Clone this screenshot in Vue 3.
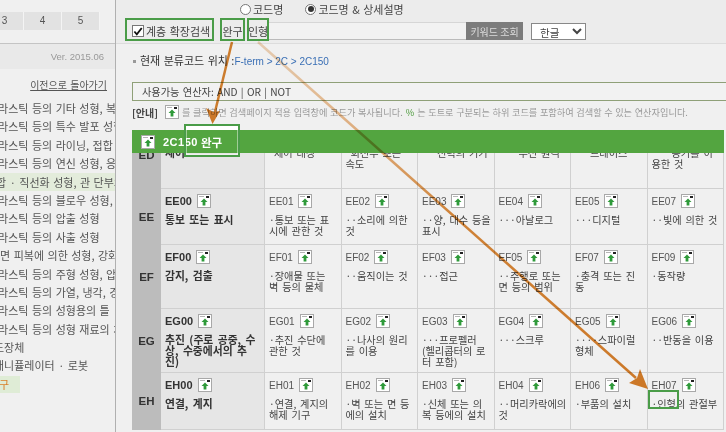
<template>
  <div class="page">
    <svg width="0" height="0" class="defs">
      <symbol id="copy-icon" viewBox="0 0 14 14">
        <rect x="0.5" y="0.5" width="13" height="13" fill="#fff" stroke="#a8a8a8" />
        <rect x="2" y="2" width="5" height="1" fill="#b5b5b5" />
        <rect x="9" y="2" width="3" height="2" fill="#222" />
        <path d="M7 4.5 L10.5 8 H8.4 V11.5 H5.6 V8 H3.5 Z" fill="#2f9a3a" />
      </symbol>
    </svg>

    <aside class="side">
      <div class="tabs">
        <span v-for="n in [3, 4, 5]" :key="n" class="tab">{{ n }}</span>
      </div>
      <div class="ver">Ver. 2015.06</div>
      <a class="back">이전으로 돌아가기</a>
      <ul class="tree">
        <li v-for="item in treeItems" :key="item.text" :class="item.cls">{{ item.text }}</li>
      </ul>
    </aside>

    <main class="main">
      <div class="search">
        <div class="radios">
          <label class="radio-label"><span class="radio"></span>코드명</label>
          <label class="radio-label"><span class="radio on"></span>코드명 &amp; 상세설명</label>
        </div>
        <div class="search-row">
          <label class="check-label">
            <span class="check">
              <svg width="11" height="11" viewBox="0 0 11 11">
                <path d="M1.5 5.5 L4.2 8.6 L9.6 1.6" fill="none" stroke="#111" stroke-width="2" />
              </svg>
            </span>
            계층 확장검색
          </label>
          <span class="term first">완구</span>
          <span class="term second">인형</span>
          <div class="keyword"></div>
          <button type="button" class="kw-btn">키워드 조회</button>
          <select class="lang">
            <option>한글</option>
          </select>
        </div>
      </div>

      <p class="crumb">
        <span class="bullet"></span><b>현재 분류코드 위치 :</b>
        <span class="path">F-term &gt; 2C &gt; 2C150</span>
      </p>

      <div class="ops">사용가능 연산자: AND | OR | NOT</div>

      <p class="guide">
        <b>[안내]</b>
        <svg class="icon guide-icon"><use href="#copy-icon" /></svg>
        를 클릭하면 검색페이지 적용 입력창에 코드가 복사됩니다. <em>%</em>는 도트로 구분되는 하위 코드를 포함하여 검색할 수 있는 연산자입니다.
      </p>

      <div class="bar">
        <svg class="icon bar-icon"><use href="#copy-icon" /></svg>
        <span class="bar-code">2C150</span>
        <span>완구</span>
      </div>

      <div class="grid-clip">
        <table class="grid">
          <colgroup>
            <col class="c-code" />
            <col class="c-name" />
            <col v-for="n in 6" :key="n" class="c-cell" />
          </colgroup>
          <tbody>
            <tr v-for="row in rows" :key="row.code" :style="{ height: row.h + 'px' }">
              <th class="code">{{ row.code }}</th>
              <td class="name">
                <div class="cell-head bold">
                  {{ row.head }}
                  <svg class="icon"><use href="#copy-icon" /></svg>
                </div>
                <div class="cell-text">{{ row.name }}</div>
              </td>
              <td v-for="cell in row.cells" :key="cell[0]">
                <div class="cell-head">
                  {{ cell[0] }}
                  <svg class="icon"><use href="#copy-icon" /></svg>
                </div>
                <div class="cell-text" :style="{ textIndent: (cell[2] || 0) + 'px' }">{{ cell[1] }}</div>
              </td>
            </tr>
          </tbody>
        </table>
      </div>
    </main>

    <!-- annotations drawn over the screenshot -->
    <div class="mark mark-check"></div>
    <div class="mark mark-a"></div>
    <div class="mark mark-b"></div>
    <div class="mark mark-title"></div>
    <div class="mark mark-cell"></div>
    <svg class="arrows" width="726" height="432" viewBox="0 0 726 432">
      <defs>
        <linearGradient id="fade" gradientUnits="userSpaceOnUse" x1="258" y1="42" x2="648" y2="388">
          <stop offset="0" stop-color="#f4d9bd" />
          <stop offset="0.3" stop-color="#eab27c" />
          <stop offset="0.5" stop-color="#dc8a3a" />
          <stop offset="1" stop-color="#d9802a" />
        </linearGradient>
      </defs>
      <path d="M232 42 L214 116" stroke="#d9842f" stroke-width="2.5" fill="none" />
      <path d="M212.500 124 L206 108 L213.500 112 L220 111 Z" fill="#d9802a" />
      <path d="M258 42 L636 378" stroke="url(#fade)" stroke-width="2.500" fill="none" />
      <path d="M648 389 L629 383 L637 378 L640 369 Z" fill="#d9802a" />
    </svg>
  </div>
</template>

<script setup>
const treeItems = [
  { text: '플라스틱 등의 기타 성형, 복합' },
  { text: '플라스틱 등의 특수 발포 성형' },
  { text: '플라스틱 등의 라이닝, 접합' },
  { text: '플라스틱 등의 연신 성형, 응력' },
  { text: '접합 · 직선화 성형, 관 단부의 가공', cls: 'on' },
  { text: '플라스틱 등의 블로우 성형, 열' },
  { text: '플라스틱 등의 압출 성형' },
  { text: '플라스틱 등의 사출 성형' },
  { text: '표면 피복에 의한 성형, 강화 플라', cls: 'shift-b' },
  { text: '플라스틱 등의 주형 성형, 압축' },
  { text: '플라스틱 등의 가열, 냉각, 경화' },
  { text: '플라스틱 등의 성형용의 틀' },
  { text: '플라스틱 등의 성형 재료의 처리' },
  { text: '도장체', cls: 'shift-c' },
  { text: '매니퓰레이터 · 로봇', cls: 'shift-c' },
  { text: '완구', cls: 'current' }
]

// third value on a cell is the first-line indent; the word joiner keeps 속도 together
const rows = [
  {
    code: 'ED',
    h: 67,
    head: 'ED00',
    name: '제어',
    cells: [
      ['ED01', '제어 대상', 5],
      ['ED02', '회전수 또는 속\u2060도', 5],
      ['ED03', '전력의 기기', 15],
      ['ED04', '무선 원격', 20],
      ['ED05', '트레이스', 15],
      ['ED06', '공기를 이용한 것', 20]
    ]
  },
  {
    code: 'EE',
    h: 56,
    head: 'EE00',
    name: '통보 또는 표시',
    cells: [
      ['EE01', '·통보 또는 표시에 관한 것'],
      ['EE02', '··소리에 의한 것'],
      ['EE03', '··양, 대수 등을 표시'],
      ['EE04', '···아날로그'],
      ['EE05', '···디지털'],
      ['EE07', '··빛에 의한 것']
    ]
  },
  {
    code: 'EF',
    h: 64,
    head: 'EF00',
    name: '감지, 검출',
    cells: [
      ['EF01', '·장애물 또는 벽 등의 물체'],
      ['EF02', '··움직이는 것'],
      ['EF03', '···접근'],
      ['EF05', '··주행로 또는 면 등의 범위'],
      ['EF07', '·충격 또는 진동'],
      ['EF09', '·동작량']
    ]
  },
  {
    code: 'EG',
    h: 64,
    head: 'EG00',
    name: '추진 (주로 공중, 수상, 수중에서의 추진)',
    cells: [
      ['EG01', '·추진 수단에 관한 것'],
      ['EG02', '··나사의 원리를 이용'],
      ['EG03', '···프로펠러 (헬리콥터의 로터 포함)'],
      ['EG04', '···스크루'],
      ['EG05', '····스파이럴형체'],
      ['EG06', '··반동을 이용']
    ]
  },
  {
    code: 'EH',
    h: 57,
    head: 'EH00',
    name: '연결, 계지',
    cells: [
      ['EH01', '·연결, 계지의 해제 기구'],
      ['EH02', '·벽 또는 면 등에의 설치'],
      ['EH03', '·신체 또는 의복 등에의 설치'],
      ['EH04', '··머리카락에의 것'],
      ['EH06', '·부품의 설치'],
      ['EH07', '·인형의 관절부']
    ]
  }
]
</script>

<style>
body {
  background: #f0f0f0;
  overflow: hidden;
}
</style>

<style scoped>
.page {
  position: relative;
  display: flex;
  width: 726px;
  height: 432px;
  overflow: hidden;
  background: #f0f0f0;
  color: #444;
  font-family: "Noto Sans CJK KR", "Liberation Sans", sans-serif;
  font-size: 11px;
  word-spacing: 1px;
}

.defs {
  position: absolute;
}

.icon {
  width: 14px;
  height: 14px;
  flex: none;
}

.side {
  width: 115px;
  flex: none;
  border-right: 1px solid #b0b0b0;
  overflow: hidden;
  white-space: nowrap;
}

.tabs {
  display: flex;
  height: 44px;
  box-sizing: border-box;
  margin-left: -14px;
  padding-top: 12px;
  border-bottom: 1px solid #c4c4c4;
}

.tab {
  width: 38px;
  height: 18px;
  line-height: 18px;
  text-align: center;
  background: #e2e2e2;
  border-right: 1px solid #f4f4f4;
  box-sizing: border-box;
  font-family: "Liberation Sans", sans-serif;
  font-size: 10px;
  color: #555;
}

.ver {
  height: 25px;
  line-height: 25px;
  padding-right: 11px;
  text-align: right;
  background: #e9e9e9;
  color: #999;
  font-family: "Liberation Sans", sans-serif;
  font-size: 9.5px;
  word-spacing: 0;
}

.back {
  display: block;
  margin: 7px 8px 0 0;
  height: 18px;
  line-height: 18px;
  text-align: right;
  text-decoration: underline;
  color: #555;
  font-size: 10px;
}

.tree {
  list-style: none;
  margin: 5px 0 0;
  padding: 0;
}

.tree li {
  height: 18.4px;
  line-height: 18.4px;
  margin-left: -12px;
  color: #555;
}

.tree li.on {
  background: #e3ecdb;
  margin-left: 0;
  text-indent: -14px;
}

.tree li.shift-b {
  margin-left: -10px;
}

.tree li.shift-c {
  margin-left: -6px;
}

.tree li.current {
  width: 20px;
  margin: 1px 0 0;
  height: 17px;
  line-height: 17px;
  text-indent: -11px;
  background: #dfecd6;
  color: #d9802a;
}

.main {
  flex: 1;
  min-width: 0;
  white-space: nowrap;
}

.search {
  height: 44px;
  box-sizing: border-box;
  background: #ececec;
  border-bottom: 1px solid #dcdcdc;
}

.radios {
  display: flex;
  gap: 22px;
  height: 18px;
  padding-left: 124px;
  box-sizing: border-box;
  align-items: center;
}

.radio-label,
.check-label {
  display: flex;
  align-items: center;
  gap: 2px;
}

.radio {
  width: 9px;
  height: 9px;
  border: 1px solid #777;
  border-radius: 50%;
  background: #fff;
  position: relative;
}

.radio.on::after {
  content: "";
  position: absolute;
  inset: 1.5px;
  border-radius: 50%;
  background: #333;
}

.search-row {
  display: flex;
  align-items: center;
  height: 18px;
  margin-top: 4px;
  padding-left: 16px;
}

.check-label {
  width: 88px;
  flex: none;
}

.check {
  width: 10px;
  height: 10px;
  display: flex;
  flex: none;
  background: #fff;
  border: 1px solid #777;
}

.term {
  text-align: center;
  flex: none;
}

.term.first {
  width: 25px;
  margin-right: 2px;
}

.term.second {
  width: 22px;
}

.keyword {
  flex: 1;
  height: 18px;
  box-sizing: border-box;
  border-top: 1px solid #d6d6d6;
  border-bottom: 1px solid #bbb;
  background: #f2f2f2;
}

.kw-btn {
  width: 57px;
  height: 18px;
  padding: 0;
  border: 0;
  background: #7c7c7c;
  color: #ddd;
  font: inherit;
  font-size: 10px;
}

.lang {
  width: 55px;
  height: 17px;
  margin: 0 140px 0 8px;
  padding: 0 0 0 4px;
  border: 1px solid #888;
  border-radius: 0;
  background: #fff;
  color: #444;
  font: inherit;
  font-size: 10.5px;
  flex: none;
}

.crumb {
  height: 14px;
  line-height: 14px;
  margin: 9px 0 0 17px;
}

.crumb b {
  font-weight: 400;
  color: #333;
}

.bullet {
  display: inline-block;
  width: 3px;
  height: 3px;
  margin: 0 4px 2px 0;
  background: #999;
}

.path {
  color: #3a6fb5;
  font-family: "Liberation Sans", sans-serif;
  font-size: 10px;
  word-spacing: 0;
}

.ops {
  height: 19px;
  line-height: 17px;
  box-sizing: border-box;
  margin: 15px 0 0 16px;
  padding-left: 9px;
  border: 1px solid #8fa078;
  border-right: 0;
  background: #f2f2f2;
  font-size: 10.2px;
}

.guide {
  display: flex;
  align-items: center;
  gap: 3px;
  height: 14px;
  margin: 4px 0 0 16px;
  color: #999;
  font-size: 9.2px;
  word-spacing: 0.5px;
}

.guide b {
  color: #444;
  font-weight: 700;
  font-size: 10px;
}

.guide em {
  font-style: normal;
  color: #4c9a3c;
}

.guide-icon {
  margin-left: 4px;
}

.bar {
  display: flex;
  align-items: center;
  gap: 6px;
  width: 592px;
  height: 23px;
  margin: 11px 0 0 16px;
  padding-left: 9px;
  box-sizing: border-box;
  background: #53a540;
  color: #fff;
  font-weight: 700;
  font-size: 11.5px;
}

.bar-icon {
  margin-right: 2px;
}

.bar-code {
  font-family: "Liberation Sans", sans-serif;
  font-size: 11px;
  letter-spacing: 0.5px;
  width: 32px;
}

.grid-clip {
  height: 279px;
  overflow: hidden;
}

.grid {
  width: 591px;
  margin: -32px 0 0 16px;
  table-layout: fixed;
  border-collapse: collapse;
}

.c-code {
  width: 28px;
}

.c-name {
  width: 104px;
}

.c-cell {
  width: 76.5px;
}

.grid th,
.grid td {
  padding: 4px 2.7px 0 4px;
  vertical-align: top;
  border: 1px solid #d0d0d0;
  white-space: normal;
  word-break: break-all;
}

.grid th {
  background: #bcbcbc;
  border-color: #bcbcbc;
  padding: 0;
  vertical-align: middle;
  color: #333;
  font-family: "Liberation Sans", sans-serif;
  font-size: 11.5px;
}

.grid td.name {
  background: #e6e6e6;
  font-weight: 700;
  color: #333;
  padding-right: 6px;
}

.cell-head {
  display: flex;
  align-items: center;
  gap: 5px;
  height: 16px;
  font-family: "Liberation Sans", sans-serif;
  font-size: 10px;
  color: #555;
}

.cell-head.bold {
  font-weight: 700;
  font-size: 11px;
  color: #333;
}

.cell-text {
  margin-top: 5px;
  line-height: 11px;
  font-size: 10.2px;
  word-spacing: 1.5px;
}

.name .cell-text {
  font-size: 10.8px;
  word-spacing: 2px;
}

.mark {
  position: absolute;
  box-sizing: border-box;
  border: 2px solid #4a9c48;
}

.mark-check {
  left: 125px;
  top: 18px;
  width: 89px;
  height: 23px;
}

.mark-a {
  left: 220px;
  top: 18px;
  width: 25px;
  height: 23px;
}

.mark-b {
  left: 247px;
  top: 18px;
  width: 22px;
  height: 23px;
}

.mark-title {
  left: 184px;
  top: 124px;
  width: 56px;
  height: 33px;
  background: linear-gradient(#fff 4px, transparent 4px);
  box-shadow: inset 0 0 0 1px rgba(255, 255, 255, 0.45);
}

.mark-cell {
  left: 648px;
  top: 390px;
  width: 31px;
  height: 19px;
}

.arrows {
  position: absolute;
  left: 0;
  top: 0;
  pointer-events: none;
  mix-blend-mode: multiply;
}
</style>
